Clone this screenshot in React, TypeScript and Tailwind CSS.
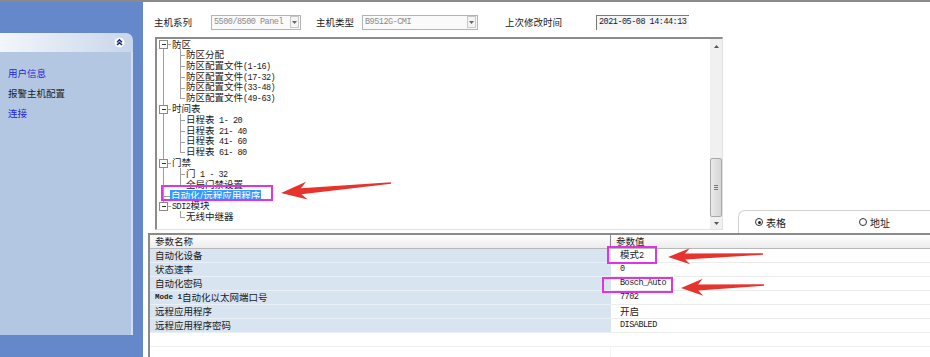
import React from 'react';

const CJK = "font-['Noto_Sans_CJK_SC',sans-serif]";

function A({ children }: { children: React.ReactNode }) {
  return (
    <span className="font-['Liberation_Mono',monospace] text-[8.5px] tracking-[-0.5px] whitespace-pre">{children}</span>
  );
}

type Row = { lvl: 0 | 1; label: React.ReactNode; sel?: boolean };

const treeRows: Row[] = [
  { lvl: 0, label: '防区' },
  { lvl: 1, label: '防区分配' },
  { lvl: 1, label: <>防区配置文件<A>(1-16)</A></> },
  { lvl: 1, label: <>防区配置文件<A>(17-32)</A></> },
  { lvl: 1, label: <>防区配置文件<A>(33-48)</A></> },
  { lvl: 1, label: <>防区配置文件<A>(49-63)</A></> },
  { lvl: 0, label: '时间表' },
  { lvl: 1, label: <>日程表<A> 1- 20</A></> },
  { lvl: 1, label: <>日程表<A> 21- 40</A></> },
  { lvl: 1, label: <>日程表<A> 41- 60</A></> },
  { lvl: 1, label: <>日程表<A> 61- 80</A></> },
  { lvl: 0, label: '门禁' },
  { lvl: 1, label: <>门<A> 1 - 32</A></> },
  { lvl: 1, label: '全局门禁设置' },
  { lvl: 0, label: '自动化/远程应用程序', sel: true },
  { lvl: 0, label: <><A>SDI2</A>模块</> },
  { lvl: 1, label: '无线中继器' },
];

const RH = 10.8;
const cy = (i: number) => Math.round(5.4 + i * RH);

function TreeLines() {
  const boxes = [0, 6, 11, 15];
  const groups: [number, number, number][] = [
    [0, 1, 5],
    [6, 7, 10],
    [11, 12, 13],
    [15, 16, 16],
  ];
  const c = '#a0a0a0';
  return (
    <svg className="absolute left-0 top-0" width="60" height="190" shapeRendering="crispEdges">
      <line x1="6.5" y1={cy(0)} x2="6.5" y2={cy(15)} stroke={c} />
      <line x1="6.5" y1={cy(14) + 0.5} x2="13" y2={cy(14) + 0.5} stroke={c} />
      {groups.map(([p, a, b]) => (
        <g key={p}>
          <line x1="23.5" y1={cy(p) + 5} x2="23.5" y2={cy(b) + 0.5} stroke={c} />
          {Array.from({ length: b - a + 1 }, (_, k) => a + k).map((r) => (
            <line key={r} x1="23.5" y1={cy(r) + 0.5} x2="28" y2={cy(r) + 0.5} stroke={c} />
          ))}
        </g>
      ))}
      {boxes.map((r) => (
        <g key={r}>
          <rect x="2.5" y={cy(r) - 3.5} width="8" height="8" fill="#fff" stroke="#8a8a8a" />
          <line x1="4.5" y1={cy(r) + 0.5} x2="9" y2={cy(r) + 0.5} stroke="#333" />
          <line x1="10.5" y1={cy(r) + 0.5} x2="14" y2={cy(r) + 0.5} stroke={c} />
        </g>
      ))}
    </svg>
  );
}

function arrow(tip: [number, number], tail: [number, number], headLen: number, headHalf: number) {
  const dx = tail[0] - tip[0];
  const dy = tail[1] - tip[1];
  const L = Math.hypot(dx, dy);
  const d = [dx / L, dy / L];
  const n = [-d[1], d[0]];
  const p = (base: [number, number], along: number, side: number) =>
    `${base[0] + d[0] * along + n[0] * side},${base[1] + d[1] * along + n[1] * side}`;
  return [
    p(tip, 0, 0),
    p(tip, headLen, headHalf),
    p(tip, headLen * 0.78, 3),
    p(tail, 0, 0.7),
    p(tail, 0, -0.7),
    p(tip, headLen * 0.78, -3),
    p(tip, headLen, -headHalf),
  ].join(' ');
}

function Overlay() {
  return (
    <svg className="pointer-events-none absolute left-0 top-0" width="930" height="357">
      <rect x="162" y="186" width="110" height="14" fill="none" stroke="#e034e0" strokeWidth="2" />
      <rect x="608" y="247" width="48" height="16" fill="none" stroke="#e034e0" strokeWidth="2" />
      <rect x="603" y="278" width="69" height="14" fill="none" stroke="#e034e0" strokeWidth="2" />
      <polygon points={arrow([281, 193], [391, 183], 26, 9)} fill="#e8322c" />
      <polygon points={arrow([668, 257], [763, 254], 22, 8)} fill="#e8322c" />
      <polygon points={arrow([681, 288], [764, 285], 22, 8.5)} fill="#e8322c" />
    </svg>
  );
}

function DropBtn() {
  return (
    <div className="ml-auto mr-[1px] flex h-[12px] w-[9px] shrink-0 items-center justify-center border border-[#c8c8c8] bg-[#f4f4f4]">
      <svg width="5" height="3" viewBox="0 0 5 3">
        <path d="M0 0h5L2.5 3z" fill="#666" />
      </svg>
    </div>
  );
}

function Radio({ on }: { on?: boolean }) {
  return (
    <div className="flex h-[8px] w-[8px] items-center justify-center rounded-full border border-[#333] bg-white">
      {on && <div className="h-[3px] w-[3px] rounded-full bg-[#222]" />}
    </div>
  );
}

const rows: [React.ReactNode, React.ReactNode][] = [
  ['自动化设备', <span className="text-[9.5px]">模式<A>2</A></span>],
  ['状态速率', <A>0</A>],
  ['自动化密码', <A>Bosch_Auto</A>],
  [<><span className="font-['Liberation_Mono',monospace] text-[7.5px] font-bold whitespace-pre">Mode 1</span>自动化以太网端口号</>, <A>7702</A>],
  ['远程应用程序', <span className="text-[9.5px]">开启</span>],
  ['远程应用程序密码', <A>DISABLED</A>],
];

export default function App() {
  return (
    <div className={`relative flex h-[357px] w-[930px] flex-col overflow-hidden bg-white text-[#1a1a1a] ${CJK}`}>
      <div className="h-[2px] bg-[#8a8a8a]" />
      <div className="flex flex-1">
        {/* Sidebar */}
        <div className="w-[143px] bg-[#6488c9] pt-[31px]">
          <div className="flex h-[302px] w-[133px] flex-col">
            <div className="flex h-[19px] items-center justify-end rounded-tr-[7px] bg-linear-to-r from-[#f3f6fb] to-[#c8d6eb] pr-[8px]">
              <svg width="11" height="11" viewBox="0 0 11 11">
                <circle cx="5.5" cy="5.5" r="5.3" fill="#fff" stroke="#c5d2e6" strokeWidth="0.6" />
                <path d="M3 5.2 5.5 2.8 8 5.2M3 8 5.5 5.6 8 8" fill="none" stroke="#1a2f8a" strokeWidth="1.5" />
              </svg>
            </div>
            <div className="flex-1 border-r-2 border-[#d5e0ef] bg-[#b3c7e2] pl-[8px] pt-[11px] text-[9.5px]">
              <div className="flex h-[20px] items-center text-[#2525d8]">用户信息</div>
              <div className="flex h-[20px] items-center text-[#1e1e1e]">报警主机配置</div>
              <div className="flex h-[20px] items-center text-[#2525d8]">连接</div>
            </div>
          </div>
        </div>

        {/* Main */}
        <div className="flex flex-1 flex-col">
          {/* Header controls */}
          <div className="h-[35px] pl-[11px] pt-[12px]">
            <div className="flex h-[16px] items-center text-[9.5px]">
              <div className="w-[57px]">主机系列</div>
              <div className="flex h-[15px] w-[90px] items-center border border-[#b4b4b4] bg-[#fafafa] pl-[2px] text-[#8a8a8a]">
                <A>5500/8500 Panel</A>
                <DropBtn />
              </div>
              <div className="ml-[15px] w-[46px]">主机类型</div>
              <div className="flex h-[15px] w-[116px] items-center border border-[#b4b4b4] bg-[#fafafa] pl-[2px] text-[#8a8a8a]">
                <A>B9512G-CMI</A>
                <DropBtn />
              </div>
              <div className="ml-[27px] w-[91px]">上次修改时间</div>
              <div className="flex h-[15px] w-[93px] items-center border-l border-t border-[#7a7a7a] border-b-[#e4e4e4] border-r-[#e4e4e4] bg-[#f6f6f6] pl-[2px]">
                <A>2021-05-08 14:44:13</A>
              </div>
            </div>
          </div>

          {/* Tree + tab */}
          <div className="flex h-[196px]">
            <div className="ml-[12px] flex h-[193px] w-[568px] border-b border-l-2 border-r border-t-2 border-[#8c8c8c] border-b-[#e2e2e2] border-r-[#e2e2e2]">
              <div className="relative flex-1 text-[9.5px]">
                <TreeLines />
                <div className="relative">
                  {treeRows.map((r, i) => (
                    <div
                      key={i}
                      className={`flex h-[10.8px] items-center leading-none whitespace-nowrap ${
                        r.sel ? 'pl-[13px]' : r.lvl === 0 ? 'pl-[15px]' : 'pl-[29px]'
                      }`}
                    >
                      {r.sel ? (
                        <span className="bg-[#3399ff] px-[1px] py-[1px] text-white">{r.label}</span>
                      ) : (
                        <span>{r.label}</span>
                      )}
                    </div>
                  ))}
                </div>
              </div>
              <div className="flex w-[12px] flex-col bg-[#f0f0f0]">
                <div className="flex h-[14px] items-center justify-center">
                  <svg width="5" height="3" viewBox="0 0 5 3">
                    <path d="M0 3h5L2.5 0z" fill="#555" />
                  </svg>
                </div>
                <div className="flex-1" />
                <div className="flex h-[59px] flex-col items-center justify-center rounded-[2px] border border-[#a8a8a8] bg-linear-to-r from-[#eaeaea] to-[#d6d6d6]">
                  <div className="h-[1px] w-[4px] bg-[#777]" />
                  <div className="mt-[1px] h-[1px] w-[4px] bg-[#777]" />
                  <div className="mt-[1px] h-[1px] w-[4px] bg-[#777]" />
                </div>
                <div className="flex h-[12px] items-center justify-center">
                  <svg width="5" height="3" viewBox="0 0 5 3">
                    <path d="M0 0h5L2.5 3z" fill="#555" />
                  </svg>
                </div>
              </div>
            </div>
            <div className="ml-[15px] flex h-[23px] flex-1 items-center self-end rounded-tl-[7px] border-l border-t border-[#d2d2d2] pl-[16px] text-[10px]">
              <Radio on />
              <span className="ml-[3px]">表格</span>
              <div className="ml-[73px]">
                <Radio />
              </div>
              <span className="ml-[3px]">地址</span>
            </div>
          </div>

          {/* Table */}
          <div className="ml-[5px] flex flex-1 flex-col border-l-2 border-t-2 border-[#8a8a8a] text-[9.5px]">
            <div className="flex h-[14px] border-b border-[#b8b8b8] bg-linear-to-b from-[#ffffff] to-[#ececec]">
              <div className="flex w-[461px] items-center border-r border-[#8a8a8a] pl-[5px] leading-none">参数名称</div>
              <div className="flex flex-1 items-center pl-[5px] leading-none">参数值</div>
            </div>
            {rows.map(([n, v], i) => (
              <div key={i} className="flex h-[14px]">
                <div className="flex w-[461px] items-center border-b border-[#eaf0f8] bg-[#d9e4f1] pl-[5px] leading-none whitespace-nowrap">
                  {n}
                </div>
                <div className="flex flex-1 items-center border-b border-[#ececec] pl-[9px] leading-none">{v}</div>
              </div>
            ))}
            <div className="flex h-[14px]">
              <div className="w-[461px] border-b border-[#f0f0f0]" />
              <div className="flex-1 border-b border-[#f0f0f0]" />
            </div>
            <div className="flex flex-1">
              <div className="w-[461px] border-r border-[#f3f3f3]" />
            </div>
          </div>
        </div>
      </div>
      <Overlay />
    </div>
  );
}
